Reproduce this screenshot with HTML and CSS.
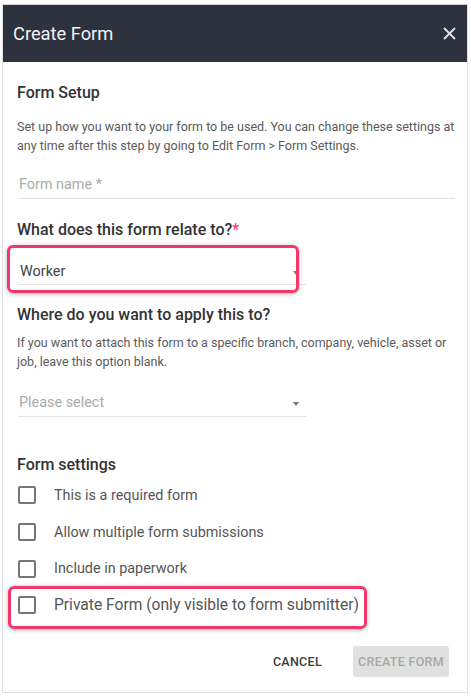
FILE: index.html
```html
<!DOCTYPE html>
<html lang="en">
<head>
    <meta charset="UTF-8">
    <title>Create Form</title>
    <meta name="viewport" content="width=device-width, initial-scale=1">
    <link rel="stylesheet" href="styles.css">
</head>
<body>
    <main class="dialog">
        <header class="dialog-head">
            <h1>Create Form</h1>
            <button class="close" aria-label="Close">
                <svg width="13" height="13" viewBox="0 0 13 13"><path d="M1 1L12 12M12 1L1 12" stroke="currentColor" stroke-width="1.8" fill="none"/></svg>
            </button>
        </header>
        <section class="dialog-body">
            <h2 class="title first">Form Setup</h2>
            <p class="hint">Set up how you want to your form to be used. You can change these settings at any time after this step by going to Edit Form &gt; Form Settings.</p>

            <div class="field name-field">
                <span class="placeholder">Form name *</span>
            </div>

            <h2 class="title relate">What does this form relate to?<span class="req">*</span></h2>
            <div class="marked select-wrap">
                <div class="field select">
                    <span class="value">Worker</span>
                    <i class="caret"></i>
                </div>
                <span class="mark mark-select"></span>
            </div>

            <h2 class="title apply">Where do you want to apply this to?</h2>
            <p class="hint tight">If you want to attach this form to a specific branch, company, vehicle, asset or job, leave this option blank.</p>
            <div class="field select please">
                <span class="placeholder">Please select</span>
                <i class="caret"></i>
            </div>

            <h2 class="title settings">Form settings</h2>
            <ul class="checks">
                <li><span class="box"></span>This is a required form</li>
                <li><span class="box"></span>Allow multiple form submissions</li>
                <li><span class="box"></span>Include in paperwork</li>
                <li class="marked private"><span class="box"></span>Private Form (only visible to form submitter)<span class="mark mark-private"></span></li>
            </ul>

            <footer class="actions">
                <button class="btn cancel">Cancel</button>
                <button class="btn create" disabled>Create Form</button>
            </footer>
        </section>
    </main>
</body>
</html>
```

FILE: styles.css
```css
* {
    box-sizing: border-box;
}
body {
    margin: 0;
    padding: 0;
    background: #fff;
    font-family: Roboto, "Liberation Sans", sans-serif;
}
.dialog {
    margin: 4px 3px 0 2px;
    width: 466px;
    height: 689px;
    border: 1px solid #dedede;
    border-top-color: #d0d0d0;
    background: #fff;
}
.dialog-head {
    display: flex;
    align-items: center;
    justify-content: space-between;
    height: 57px;
    padding: 0 11px 0 10px;
    background: #2e323f;
}
.dialog-head h1 {
    margin: 0;
    color: #f2f2f2;
    font-size: 18.3px;
    font-weight: 400;
}
.close {
    all: unset;
    display: flex;
    color: #e4e4e4;
    cursor: pointer;
}
.dialog-body {
    padding: 21px 12px 0 14px;
}
.title {
    margin: 0;
    color: #333;
    font-size: 16px;
    font-weight: 500;
    line-height: 20px;
}
.req {
    color: #f03c5f;
    font-weight: 400;
}
.hint {
    margin: 14px 0 0;
    color: #5a5a5a;
    font-size: 12.5px;
    line-height: 19px;
}
.hint.tight {
    margin-top: 8px;
}
.field {
    display: flex;
    align-items: center;
    justify-content: space-between;
    margin-left: 1px;
    border-bottom: 1px solid #e2e2e2;
    font-size: 14.4px;
    line-height: 20px;
}
.placeholder {
    color: #ababab;
}
.value {
    color: #444;
    padding-left: 1px;
}
.name-field {
    margin-top: 16px;
    padding: 4px 0 3px 1px;
}
.relate {
    margin-top: 21px;
}
.select {
    width: 288px;
    padding: 0 7px 2px 1px;
}
.marked {
    position: relative;
}
.select-wrap {
    margin-top: 22px;
}
.caret {
    width: 0;
    height: 0;
    margin-top: 2px;
    border-left: 3.5px solid transparent;
    border-right: 3.5px solid transparent;
    border-top: 4px solid #777;
}
.mark {
    position: absolute;
    border: 3px solid #f2386b;
    border-radius: 6px;
    box-shadow: 0 1px 4px rgba(0, 0, 0, 0.3);
    pointer-events: none;
}
.mark-select {
    left: -10px;
    top: -17px;
    width: 292px;
    height: 48px;
}
.apply {
    margin-top: 20px;
}
.please {
    margin-top: 22px;
    padding-bottom: 3px;
}
.settings {
    margin-top: 38px;
}
.checks {
    list-style: none;
    margin: 2px 0 0;
    padding: 0;
}
.checks li {
    display: flex;
    align-items: center;
    gap: 18px;
    height: 36.7px;
    color: #555;
    font-size: 14.4px;
}
.checks .private {
    font-size: 15.6px;
}
.box {
    width: 18px;
    height: 18px;
    margin-left: 1px;
    border: 2px solid #767676;
    border-radius: 2px;
}
.mark-private {
    left: -9px;
    top: -1px;
    width: 359px;
    height: 43px;
}
.actions {
    display: flex;
    justify-content: flex-end;
    align-items: center;
    gap: 15px;
    margin-top: 22px;
    padding-right: 6px;
}
.btn {
    all: unset;
    height: 31px;
    padding: 0 6px;
    font-size: 12.5px;
    font-weight: 500;
    line-height: 31px;
    text-transform: uppercase;
    letter-spacing: 0.3px;
    border-radius: 3px;
}
.cancel {
    color: #3c3c3c;
    padding: 0 16px;
}
.create {
    width: 96px;
    text-align: center;
    padding: 0;
    background: #e0e0e0;
    color: #a8a8a8;
}
```
